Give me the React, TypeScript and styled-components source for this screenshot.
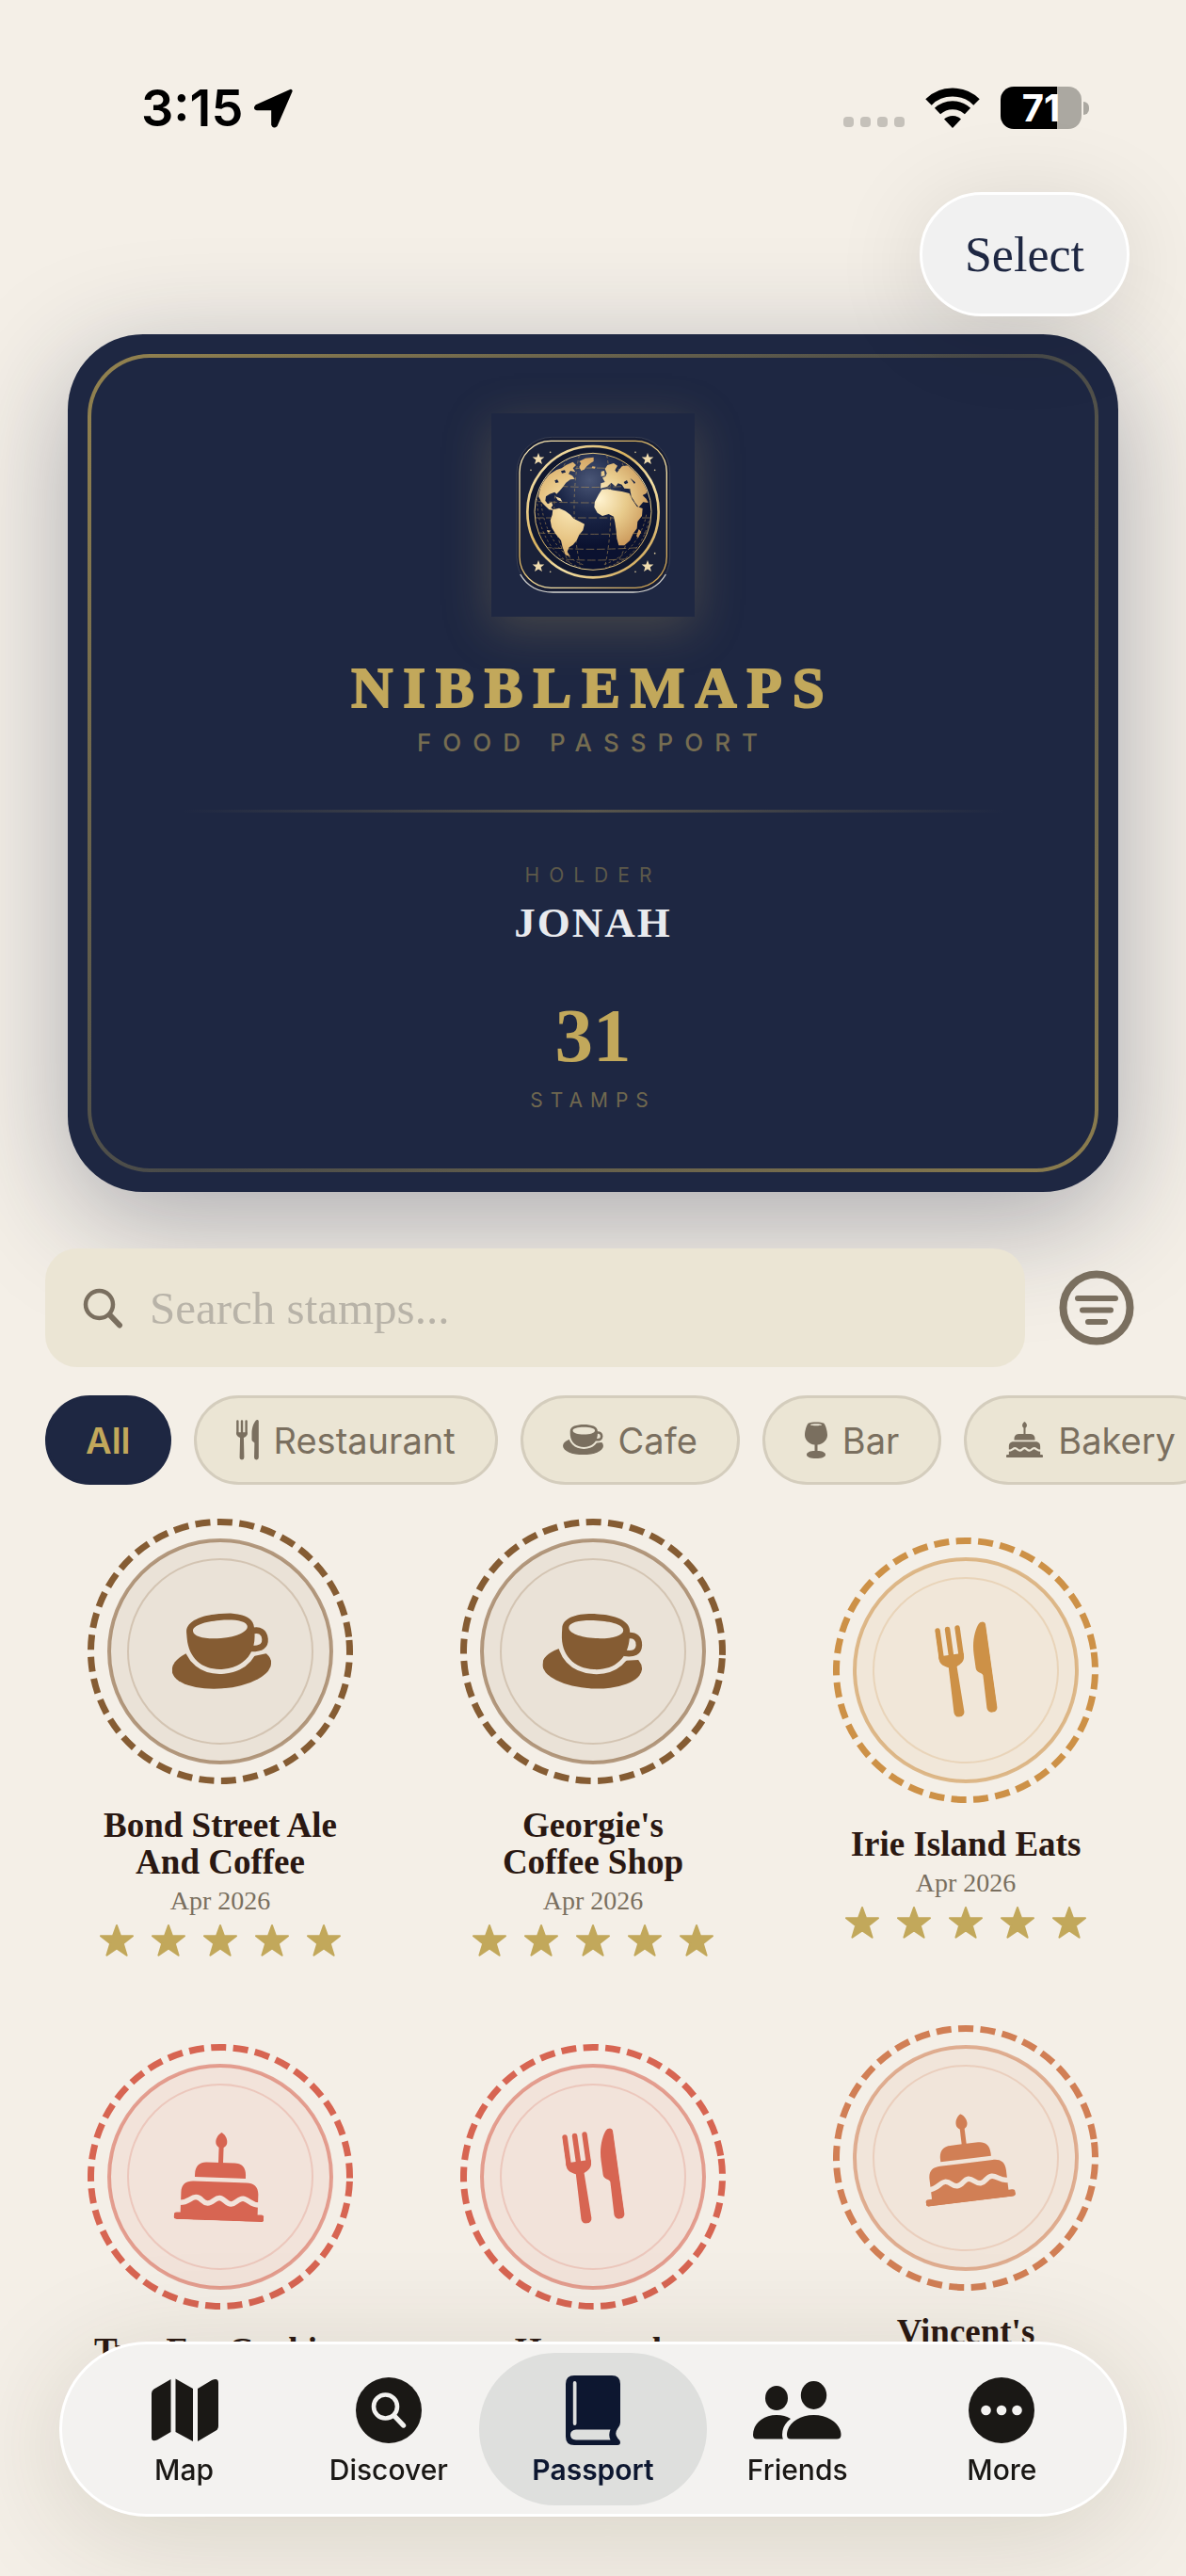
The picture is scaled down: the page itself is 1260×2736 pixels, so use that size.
import React, { useId } from "react";
import styled, { createGlobalStyle } from "styled-components";

const serif = `"Liberation Serif", "Times New Roman", serif`;
const sans = `Inter, Roboto, "Liberation Sans", sans-serif`;

const color = {
  paper: "#f4efe7",
  navy: "#1e2742",
  gold: "#c2a85b",
  sand: "#ebe5d4",
  sandLine: "#d4cdbd",
  taupe: "#7a6f5f",
  ink: "#2a1812",
};

const GlobalStyle = createGlobalStyle`
  *, *::before, *::after { box-sizing: border-box; }
  body { margin: 0; background: ${color.paper}; font-family: ${sans}; }
  button, input { font: inherit; color: inherit; }
  button { border: 0; background: none; padding: 0; margin: 0; cursor: pointer; }
  ul { list-style: none; margin: 0; padding: 0; }
  h1, h2, p { margin: 0; }
  svg { display: block; flex: none; }
`;

const Screen = styled.div`
  min-height: 100vh;
  overflow: hidden;
  background: ${color.paper};
`;

/* ---------- status bar ---------- */

const StatusBar = styled.div`
  display: flex;
  justify-content: space-between;
  align-items: center;
  padding: 92px 103px 0 150px;
  color: #000;
`;

const StatusGroup = styled.div<{ $gap: number }>`
  display: flex;
  align-items: center;
  gap: ${(p) => p.$gap}px;
  height: 45px;
`;

const Clock = styled.time`
  font-size: 54px;
  line-height: 45px;
  font-weight: 600;
`;

const SignalDots = styled.div`
  display: flex;
  gap: 7px;
  align-self: flex-end;
  padding-bottom: 2px;
`;

const SignalDot = styled.span`
  width: 11px;
  height: 11px;
  border-radius: 4px;
  background: #c5c1ba;
`;

const Battery = styled.div`
  display: flex;
  align-items: center;
  gap: 2px;
`;

const BatteryBody = styled.div<{ $level: number }>`
  width: 86px;
  height: 45px;
  border-radius: 14px;
  background: linear-gradient(to right, #000 ${(p) => p.$level}%, #aba8a1 ${(p) => p.$level}%);
  color: #fff;
  font-size: 40px;
  font-weight: 700;
  line-height: 45px;
  text-align: center;
`;

const BatteryTip = styled.span`
  width: 6px;
  height: 14px;
  border-radius: 0 6px 6px 0;
  background: #aba8a1;
`;

/* ---------- header ---------- */

const Toolbar = styled.header`
  display: flex;
  justify-content: flex-end;
  padding: 67px 60px 19px;
`;

const SelectButton = styled.button`
  position: relative;
  z-index: 1;
  height: 132px;
  padding: 0 45px;
  border: 3px solid #fff;
  border-radius: 66px;
  background: #f1f1f1;
  box-shadow: 0 12px 100px rgba(0, 0, 0, 0.12);
  color: ${color.navy};
  font-family: ${serif};
  font-size: 52px;
`;

/* ---------- passport card ---------- */

const Card = styled.section`
  margin: 0 72px;
  padding: 21px;
  border-radius: 80px;
  background: ${color.navy};
  box-shadow: 0 30px 120px rgba(30, 39, 66, 0.34);
`;

const CardFrame = styled.div`
  display: flex;
  flex-direction: column;
  align-items: center;
  padding: 59px 96px 60px;
  border: 4px solid transparent;
  border-radius: 66px;
  background:
    linear-gradient(${color.navy}, ${color.navy}) padding-box,
    linear-gradient(135deg, #94834f, #474949 50%, #8c7d4e) border-box;
`;

const Emblem = styled.div`
  width: 216px;
  height: 216px;
  background: ${color.navy};
  box-shadow: 0 12px 48px rgba(194, 168, 91, 0.26);
`;

const Brand = styled.h1`
  margin-top: 46px;
  color: ${color.gold};
  font-family: ${serif};
  font-size: 61px;
  line-height: 60px;
  letter-spacing: 11px;
  font-weight: 700;
  -webkit-text-stroke: 2px ${color.gold};
`;

const Tagline = styled.p`
  margin-top: 13px;
  color: #766d51;
  font-size: 26px;
  line-height: 30px;
  font-weight: 500;
  letter-spacing: 12px;
`;

const Divider = styled.hr`
  width: 100%;
  height: 3px;
  margin: 56px 0 55px;
  border: 0;
  background: linear-gradient(to right, transparent, #58554b, transparent);
`;

const Caption = styled.p<{ $dim?: boolean }>`
  color: ${(p) => (p.$dim ? "#5d594a" : "#70684f")};
  font-size: 21px;
  line-height: 24px;
  letter-spacing: ${(p) => (p.$dim ? 10 : 8)}px;
`;

const Holder = styled.p`
  margin-top: 14px;
  color: #e9eaee;
  font-family: ${serif};
  font-size: 45px;
  line-height: 48px;
  font-weight: 700;
  letter-spacing: 2px;
`;

const Count = styled.p`
  margin: 54px 0 15px;
  color: ${color.gold};
  font-family: ${serif};
  font-size: 81px;
  line-height: 84px;
  font-weight: 700;
`;

/* ---------- search and filters ---------- */

const SearchRow = styled.div`
  position: relative;
  display: flex;
  align-items: center;
  gap: 36px;
  padding: 60px 55px 0 48px;
`;

const SearchBox = styled.label`
  flex: 1;
  display: flex;
  align-items: center;
  gap: 28px;
  height: 126px;
  padding: 0 40px;
  border-radius: 34px;
  background: ${color.sand};
  color: ${color.taupe};
`;

const SearchInput = styled.input`
  flex: 1;
  min-width: 0;
  padding: 0;
  border: 0;
  outline: 0;
  background: transparent;
  font-family: ${serif};
  font-size: 49px;
  &::placeholder {
    color: #b8b3a8;
    opacity: 1;
  }
`;

const IconButton = styled.button`
  color: ${color.taupe};
`;

const Chips = styled.div`
  display: flex;
  gap: 24px;
  margin-top: 30px;
  padding: 0 48px;
  overflow-x: auto;
  scrollbar-width: none;
`;

const Chip = styled.button<{ $active?: boolean }>`
  flex: none;
  display: flex;
  align-items: center;
  gap: 16px;
  height: 95px;
  padding: 0 ${(p) => (p.$active ? 40 : 42)}px;
  border: 3px solid ${(p) => (p.$active ? color.navy : color.sandLine)};
  border-radius: 48px;
  background: ${(p) => (p.$active ? color.navy : color.sand)};
  color: ${(p) => (p.$active ? color.gold : color.taupe)};
  font-size: 38px;
  font-weight: ${(p) => (p.$active ? 600 : 400)};
`;

/* ---------- stamps ---------- */

const StampGrid = styled.ul`
  display: grid;
  grid-template-columns: repeat(3, 1fr);
  align-items: center;
  gap: 72px 24px;
  padding: 36px 48px 120px;
`;

const StampItem = styled.li`
  display: flex;
  flex-direction: column;
  align-items: center;
`;

const StampName = styled.h2`
  margin-top: 24px;
  max-width: 270px;
  color: ${color.ink};
  font-family: ${serif};
  font-size: 37px;
  line-height: 39px;
  font-weight: 700;
  text-align: center;
`;

const StampDate = styled.time`
  margin-top: 5px;
  color: ${color.taupe};
  font-family: ${serif};
  font-size: 28px;
  line-height: 33px;
`;

const Stars = styled.div`
  display: flex;
  gap: 19px;
  margin-top: 8px;
  color: ${color.gold};
`;

/* ---------- tab bar ---------- */

const TabBar = styled.nav`
  position: fixed;
  left: 63px;
  right: 63px;
  bottom: 63px;
  display: flex;
  padding: 9px 21px;
  border: 3px solid #fff;
  border-radius: 93px;
  background: #f3f2f0;
  box-shadow: 0 18px 120px rgba(50, 40, 10, 0.15);
`;

const Tab = styled.button<{ $active?: boolean }>`
  flex: 1;
  display: flex;
  flex-direction: column;
  align-items: center;
  gap: 8px;
  height: 162px;
  margin: 0 -12px;
  padding-top: 24px;
  border-radius: 81px;
  background: ${(p) => (p.$active ? "#dedfdd" : "transparent")};
  color: ${(p) => (p.$active ? "#0d1730" : "#1a1815")};
  font-size: 30px;
  line-height: 36px;
  font-weight: ${(p) => (p.$active ? 600 : 500)};
`;

/* ---------- glyphs ---------- */

type GlyphProps = { width: number; angle?: number };

function ForkKnife({ width, angle = 0 }: GlyphProps) {
  return (
    <svg width={width} viewBox="0 0 56 99" transform={`rotate(${angle})`} fill="currentColor" aria-hidden>
      <g stroke="currentColor" strokeWidth="5.6" strokeLinecap="round">
        <path d="M3.2 3.2V34M14 3.2V34M24.8 3.2V34" />
      </g>
      <path d="M.4 31H27.6V34C27.6 40 23 42.500 18.500 44.500L19.600 93.500a5.600 5.600 0 0 1-11.200 0L9.500 44.500C5 42.500.4 40 .4 34Z" />
      <path d="M55.600 4V93.500a5.600 5.600 0 0 1-11.200 0L45.200 58C45.200 54.500 38.500 54.500 38.500 49V34C38.500 19 44 7 48.500 2C51-1 55.600 0 55.600 4Z" />
    </svg>
  );
}

function Cup({ width, angle = 0 }: GlyphProps) {
  const id = useId();
  const mug = "M19 17C19 5 36 0 55 0S91 5 91 17V23C91 46 76 59 55 59S19 46 19 23Z";
  return (
    <svg width={width} viewBox="0 0 106 80" transform={`rotate(${angle})`} aria-hidden>
      <mask id={id} maskUnits="userSpaceOnUse" x="0" y="0" width="106" height="80">
        <rect width="106" height="80" fill="#fff" />
        <path d={mug} stroke="#000" strokeWidth="10" />
        <path d="M80 0H106V46L88 48Z" />
        <rect width="106" height="39" />
      </mask>
      <ellipse cx="53" cy="56" rx="53" ry="23.500" fill="currentColor" mask={`url(#${id})`} />
      <path d={`${mug}M26 16C26 22 39 26 55 26S84 22 84 16S71 7 55 7S26 10 26 16Z`} fill="currentColor" fillRule="evenodd" />
      <path d="M88 21.500C97 19.500 101.500 24 101.500 31S97 41 86 40" fill="none" stroke="currentColor" strokeWidth="6.500" />
    </svg>
  );
}

function Cake({ width, angle = 0 }: GlyphProps) {
  const id = useId();
  return (
    <svg width={width} viewBox="0 0 96 94" transform={`rotate(${angle})`} fill="currentColor" aria-hidden>
      <mask id={id} maskUnits="userSpaceOnUse" x="0" y="0" width="96" height="94">
        <rect width="96" height="94" fill="#fff" />
        <path
          d="M4 75.500C14 77 17 69.500 23 69.500S30 75.500 35.500 75.500S43 69.500 48 69.500S55 75.500 60.500 75.500S67 69.500 73 69.500S82 77 92 75.500"
          fill="none"
          stroke="#000"
          strokeWidth="5.500"
        />
      </mask>
      <path d="M48 0C51.500 2 54 6 54 10S51 16.500 48 16.500S42 14 42 10S44.500 2 48 0Z" />
      <path d="M45.500 14h5V33h-5Z" />
      <path d="M21 48V45C21 36 26 32 33 32H63C70 32 75 36 75 45V48Z" />
      <g mask={`url(#${id})`}>
        <path d="M7 86V65C7 56 12 52.500 20 52.500H76C84 52.500 89 56 89 65V86H92.500a3.500 3.500 0 0 1 0 7.500H3.500a3.500 3.500 0 0 1 0-7.500Z" />
      </g>
    </svg>
  );
}

function WineGlass({ width }: GlyphProps) {
  return (
    <svg width={width} viewBox="0 0 24 39" fill="currentColor" fillRule="evenodd" aria-hidden>
      <path d="M4 1.500C6 0 18 0 20 1.500C22 3 24 10 24 14C24 20 19 24 13.500 24.500V31C18 31 22 32.500 22 35S18 39 12 39S2 37.500 2 35S6 31 10.500 31V24.500C5 24 0 20 0 14C0 10 2 3 4 1.500ZM6 3.200C6 4.500 18 4.500 18 3.200S6 2 6 3.200Z" />
    </svg>
  );
}

function Star() {
  return (
    <svg width="36" height="36" viewBox="0 0 36 36" fill="currentColor" stroke="currentColor" strokeWidth="2" strokeLinejoin="round" aria-hidden>
      <path d="M18 2L22 13.200H35L24.800 21.200L28.600 33.800L18 26.400L7.400 33.800L11.200 21.200L1 13.200H14Z" />
    </svg>
  );
}

function starPoints(cx: number, cy: number, r: number) {
  return Array.from({ length: 10 }, (_, i) => {
    const rad = i % 2 ? r * 0.42 : r;
    const a = (Math.PI / 5) * i - Math.PI / 2;
    return `${cx + rad * Math.cos(a)},${cy + rad * Math.sin(a)}`;
  }).join(" ");
}

function GlobeEmblem() {
  return (
    <svg width="216" height="216" viewBox="66 57 648 648" role="img" aria-label="Globe emblem">
      <defs>
        <linearGradient id="gold" x1="0" y1="0" x2="1" y2="1">
          <stop offset="0" stopColor="#fdf0c4" />
          <stop offset=".4" stopColor="#d9b25e" />
          <stop offset=".6" stopColor="#f5e2a8" />
          <stop offset="1" stopColor="#c49440" />
        </linearGradient>
        <radialGradient id="landEast" cx="410" cy="330" r="190" gradientUnits="userSpaceOnUse">
          <stop offset="0" stopColor="#fff3d0" />
          <stop offset=".45" stopColor="#e8cb8c" />
          <stop offset="1" stopColor="#c48c4e" />
        </radialGradient>
        <radialGradient id="landWest" cx="320" cy="360" r="210" gradientUnits="userSpaceOnUse">
          <stop offset="0" stopColor="#f9e7b6" />
          <stop offset=".5" stopColor="#e6c382" />
          <stop offset="1" stopColor="#c99455" />
        </radialGradient>
        <radialGradient id="sea" cx="380" cy="270" r="210" gradientUnits="userSpaceOnUse">
          <stop offset="0" stopColor="#4a5676" />
          <stop offset=".5" stopColor="#1c2748" />
          <stop offset="1" stopColor="#0b1230" />
        </radialGradient>
        <clipPath id="disc">
          <circle cx="390" cy="370" r="184" />
        </clipPath>
      </defs>
      <rect x="147" y="133" width="488" height="495" rx="112" fill="#171d34" stroke="#454b5e" strokeWidth="2" />
      <path d="M158 570C180 608 215 627 262 627H518C565 627 600 608 622 570" fill="none" stroke="#cfcfcd" strokeWidth="4" />
      <rect x="156" y="145" width="469" height="468" rx="100" fill="#1a2138" stroke="url(#gold)" strokeWidth="4" />
      <circle cx="390" cy="371" r="204" fill="#10172e" />
      <circle cx="390" cy="371" r="209" fill="none" stroke="url(#gold)" strokeWidth="8" />
      <circle cx="390" cy="370" r="186" fill="url(#sea)" stroke="url(#gold)" strokeWidth="3" />
      <g clipPath="url(#disc)">
        <g fill="none" stroke="#c9a55c" strokeWidth="2.500" opacity=".6">
          <path d="M300 236Q390 226 480 236M250 287Q390 298 530 287M215 338Q390 346 565 338M206 390H574M212 438Q390 446 568 438M232 484Q390 496 548 484M270 520Q390 530 510 520" strokeDasharray="26 8" />
          <path d="M346 190C324 290 324 440 350 545M310 200C250 300 250 440 320 540M434 190C452 290 452 440 428 545M475 200C530 300 530 440 462 540" strokeDasharray="10 8" />
          <path d="M212 330C212 430 260 520 350 548M224 330C230 430 280 510 360 540M568 400C550 480 500 530 430 548M560 380C545 460 490 520 420 540" strokeDasharray="8 7" />
        </g>
        <path fill="url(#landWest)" d="M216 322L222 294L232 274L250 252L274 237L290 232L304 222L326 212L336 222L326 232L334 244L318 240L312 250L324 256L332 266L318 268L304 278L294 292L284 304L274 314L268 308L252 314L240 322L238 336L246 346L258 340L262 350L256 358L266 366L250 364L236 350L226 340ZM346 210L366 200L392 197V210L382 216L370 226L362 236L352 240L346 228L352 216ZM270 322L286 328L292 338L278 334ZM388 226L398 227L396 233L386 231ZM262 364L282 359L302 368L318 380L328 392L348 402L363 410L358 430L346 444L338 462L326 476L314 484L308 498L318 514L302 508L293 484L288 462L270 440L258 420L254 398L260 380ZM243 429L256 431L246 437Z" />
        <path fill="url(#landEast)" d="M408 316L418 300L436 298L456 302L482 306L506 312L514 330L530 354L548 360L546 384L532 402L530 424L518 440L508 462L490 478L472 478L466 456L464 432L460 404L456 386L440 378L420 384L404 374L394 356L396 338ZM414 296L415 280L428 276L420 262L430 258L434 248L428 234L436 222L456 216L468 224L460 238L466 246L482 226L506 222L530 240L552 268L566 298L560 312L548 318L560 330L566 342L550 340L536 356L526 344L512 322L508 298L490 296L482 284L470 280L462 290L448 278L436 290ZM416 242L426 240L428 256L416 258ZM536 426L544 434L534 454L528 448Z" />
        <path d="M288 241L300 238L303 245L291 248ZM268 271L276 268L281 277L271 279ZM488 276L498 270L502 279L492 283ZM508 263L525 277L522 282Z" fill="#1a2444" />
      </g>
      {[
        [216, 203],
        [564, 203],
        [216, 545],
        [564, 545],
      ].map(([x, y]) => (
        <polygon key={`${x}-${y}`} points={starPoints(x, y, 20)} fill="#f0dcae" />
      ))}
      {[
        [254, 181], [525, 181], [192, 238], [587, 238], [254, 562], [525, 562], [587, 503],
      ].map(([x, y]) => (
        <circle key={`${x}-${y}`} cx={x} cy={y} r="2.500" fill="#d8c79a" />
      ))}
    </svg>
  );
}

type Kind = "restaurant" | "cafe" | "bar" | "bakery";

const SealBox = styled.div<{ $tint: string }>`
  display: grid;
  place-items: center;
  color: ${(p) => p.$tint};
  > svg {
    grid-area: 1 / 1;
  }
`;

function StampSeal({ kind, tint, angle }: { kind: Kind; tint: string; angle: number }) {
  return (
    <SealBox $tint={tint}>
      <svg width="282" height="282" viewBox="0 0 282 282" fill="none" stroke="currentColor" aria-hidden>
        <circle cx="141" cy="141" r="137.500" strokeWidth="7" strokeDasharray="16 7.450" transform={`rotate(${angle} 141 141)`} />
        <circle cx="141" cy="141" r="118" strokeWidth="4" strokeOpacity=".58" fill="currentColor" fillOpacity=".085" />
        <circle cx="141" cy="141" r="98" strokeWidth="2" strokeOpacity=".22" />
      </svg>
      {kind === "cafe" && <Cup width={106} angle={angle} />}
      {kind === "restaurant" && <ForkKnife width={55} angle={angle} />}
      {kind === "bakery" && <Cake width={96} angle={angle} />}
    </SealBox>
  );
}

/* ---------- data ---------- */

const stamps: { name: string; date: string; kind: Kind; tint: string; angle: number }[] = [
  { name: "Bond Street Ale And Coffee", date: "Apr 2026", kind: "cafe", tint: "#855c33", angle: -5 },
  { name: "Georgie's Coffee\u00a0Shop", date: "Apr 2026", kind: "cafe", tint: "#855c33", angle: 3 },
  { name: "Irie Island Eats", date: "Apr 2026", kind: "restaurant", tint: "#cd9147", angle: -8 },
  { name: "Two For Cookies", date: "Apr 2026", kind: "bakery", tint: "#d76552", angle: 2 },
  { name: "Hummock", date: "Apr 2026", kind: "restaurant", tint: "#d76552", angle: -8 },
  { name: "Vincent's Cake\u00a0Shop", date: "Apr 2026", kind: "bakery", tint: "#d17f55", angle: -7 },
];

const tabs = [
  {
    label: "Map",
    icon: (
      <svg width="74" height="74" viewBox="0 0 74 74" fill="currentColor" aria-hidden>
        <path d="M2 19Q2 16 4.500 14.500L22.500 4V60L8 68.500Q2 71 2 66ZM27.500 3.500L46 14V70L27.500 60ZM51 14L66 5Q73 2 73 8V54Q73 57 70.500 58.500L51 70Z" />
      </svg>
    ),
  },
  {
    label: "Discover",
    icon: (
      <svg width="74" height="74" viewBox="0 0 74 74" aria-hidden>
        <circle cx="37" cy="37" r="35" fill="currentColor" />
        <g fill="none" stroke="#f3f2f0" strokeLinecap="round">
          <circle cx="33.500" cy="33" r="12.500" strokeWidth="4.600" />
          <path d="M43 43L52.500 53" strokeWidth="5.400" />
        </g>
      </svg>
    ),
  },
  {
    label: "Passport",
    icon: (
      <svg width="58" height="74" viewBox="0 0 58 74" fill="currentColor" fillRule="evenodd" aria-hidden>
        <path d="M9 0H49Q58 0 58 9V50Q58 53 55.500 56Q51 62 55.500 67Q58 69 58 71Q58 74 55 74H9Q0 74 0 65V9Q0 0 9 0ZM9.500 6Q7.800 6 7.800 8V51Q7.800 53 9.500 53Q11.500 53 11.500 51V8Q11.500 6 9.500 6ZM11 57.500Q5 58 5 63T11 68.500H47.500Q45 63 47.500 57.500Z" />
      </svg>
    ),
  },
  {
    label: "Friends",
    icon: (
      <svg width="94" height="74" viewBox="0 0 94 74" fill="currentColor" aria-hidden>
        <ellipse cx="25" cy="24" rx="12" ry="13" />
        <ellipse cx="64.500" cy="21" rx="13.700" ry="15" />
        <path d="M4 67.500Q0 67.500 0 63C0 52 10 42 25 42Q34 42 40 46Q31 53 31 63Q31 66 32 67.500ZM40 67.500Q36 67.500 36 63C36 52 48 42 64.500 42S93.500 52 93.500 63Q93.500 67.500 89 67.500Z" />
      </svg>
    ),
  },
  {
    label: "More",
    icon: (
      <svg width="74" height="74" viewBox="0 0 74 74" aria-hidden>
        <circle cx="37" cy="37" r="35" fill="currentColor" />
        <g fill="#f3f2f0">
          <circle cx="20.500" cy="37" r="5.300" />
          <circle cx="37" cy="37" r="5.300" />
          <circle cx="53.500" cy="37" r="5.300" />
        </g>
      </svg>
    ),
  },
];

export default function App() {
  return (
    <Screen>
      <GlobalStyle />
      <StatusBar>
        <StatusGroup $gap={11}>
          <Clock>3:15</Clock>
          <svg width="45" height="45" viewBox="0 0 44 44" aria-hidden>
            <path d="M39 4.500L3.500 20.500Q1.500 22.500 4 23H20.500V39.500Q21.500 42 23.500 40Z" fill="#000" stroke="#000" strokeWidth="3.500" strokeLinejoin="round" />
          </svg>
        </StatusGroup>
        <StatusGroup $gap={22}>
          <SignalDots>
            <SignalDot />
            <SignalDot />
            <SignalDot />
            <SignalDot />
          </SignalDots>
          <svg width="58" height="43" viewBox="0 0 58 43" aria-hidden>
            <g fill="none" stroke="#000" strokeWidth="9">
              <path d="M3.500 15.500C17 1.600 41 1.600 54.500 15.500" />
              <path d="M13 25C22 16.500 36 16.500 45 25" />
            </g>
            <path d="M29 43L20 33.500C25 28.800 33 28.800 38 33.500Z" />
          </svg>
          <Battery>
            <BatteryBody $level={70}>71</BatteryBody>
            <BatteryTip />
          </Battery>
        </StatusGroup>
      </StatusBar>

      <Toolbar>
        <SelectButton type="button">Select</SelectButton>
      </Toolbar>

      <Card>
        <CardFrame>
          <Emblem>
            <GlobeEmblem />
          </Emblem>
          <Brand>NIBBLEMAPS</Brand>
          <Tagline>FOOD PASSPORT</Tagline>
          <Divider />
          <Caption $dim>HOLDER</Caption>
          <Holder>JONAH</Holder>
          <Count>31</Count>
          <Caption>STAMPS</Caption>
        </CardFrame>
      </Card>

      <SearchRow>
        <SearchBox>
          <svg width="43" height="43" viewBox="0 0 43 43" fill="none" stroke="currentColor" strokeLinecap="round" aria-hidden>
            <circle cx="17.500" cy="17.500" r="14.500" strokeWidth="4.500" />
            <path d="M28.500 28.500L39 39.500" strokeWidth="6" />
          </svg>
          <SearchInput type="text" placeholder="Search stamps..." aria-label="Search stamps" />
        </SearchBox>
        <IconButton type="button" aria-label="Sort and filter">
          <svg width="80" height="80" viewBox="0 0 80 80" fill="none" stroke="currentColor" strokeLinecap="round" aria-hidden>
            <circle cx="40" cy="40" r="35.500" strokeWidth="8" />
            <path d="M20 30H60M25 42.500H55M31 55H49" strokeWidth="6" />
          </svg>
        </IconButton>
      </SearchRow>

      <Chips>
        <Chip type="button" $active>All</Chip>
        <Chip type="button"><ForkKnife width={24} />Restaurant</Chip>
        <Chip type="button"><Cup width={43} />Cafe</Chip>
        <Chip type="button"><WineGlass width={24} />Bar</Chip>
        <Chip type="button"><Cake width={39} />Bakery</Chip>
      </Chips>

      <StampGrid>
        {stamps.map((s) => (
          <StampItem key={s.name}>
            <StampSeal kind={s.kind} tint={s.tint} angle={s.angle} />
            <StampName>{s.name}</StampName>
            <StampDate>{s.date}</StampDate>
            <Stars role="img" aria-label="5 out of 5 stars">
              {[0, 1, 2, 3, 4].map((i) => (
                <Star key={i} />
              ))}
            </Stars>
          </StampItem>
        ))}
      </StampGrid>

      <TabBar aria-label="Main">
        {tabs.map((t) => (
          <Tab key={t.label} type="button" $active={t.label === "Passport"}>
            {t.icon}
            {t.label}
          </Tab>
        ))}
      </TabBar>
    </Screen>
  );
}
